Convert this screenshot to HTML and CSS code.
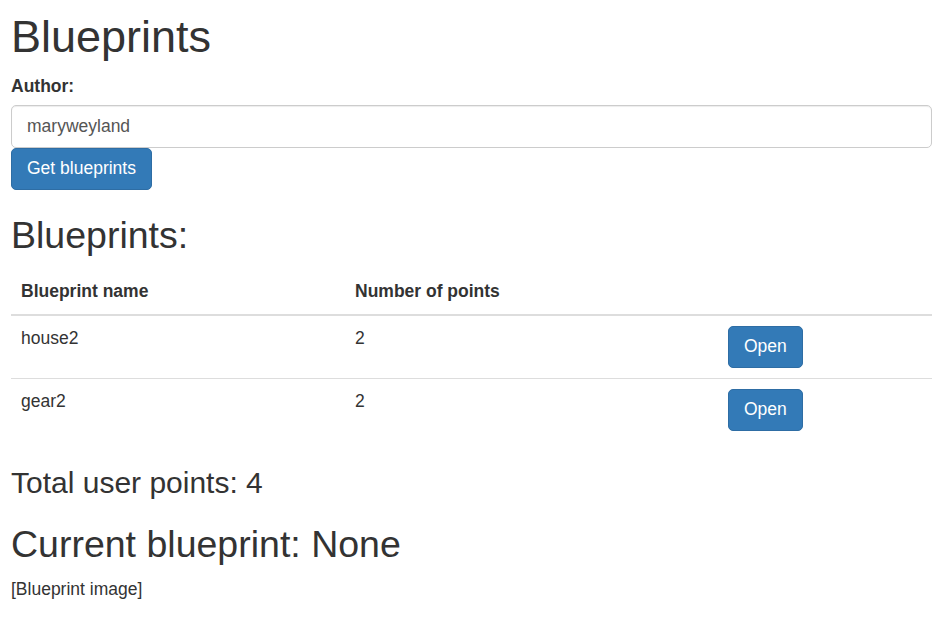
FILE: index.html
```html
<!DOCTYPE html>
<html lang="en">
<head>
<meta charset="utf-8">
<title>Blueprints</title>
<link rel="stylesheet" href="styles.css">
</head>
<body>
<div class="page">
  <h1 class="title">Blueprints</h1>
  <label class="field-label" for="author">Author:</label>
  <input id="author" class="text-input" type="text" value="maryweyland">
  <button class="btn">Get blueprints</button>

  <h2 class="section-title">Blueprints:</h2>
  <table class="bp-table">
    <thead>
      <tr>
        <th class="col-name">Blueprint name</th>
        <th class="col-points">Number of points</th>
        <th></th>
      </tr>
    </thead>
    <tbody>
      <tr>
        <td>house2</td>
        <td>2</td>
        <td><button class="btn">Open</button></td>
      </tr>
      <tr>
        <td>gear2</td>
        <td>2</td>
        <td><button class="btn">Open</button></td>
      </tr>
    </tbody>
  </table>

  <h3 class="total">Total user points: 4</h3>
  <h2 class="section-title">Current blueprint: None</h2>
  <div class="image-placeholder">[Blueprint image]</div>
</div>
</body>
</html>
```

FILE: styles.css
```css
html, body {
  margin: 0;
  padding: 0;
  background: #fff;
}

body {
  font-family: "Liberation Sans", Arial, Helvetica, sans-serif;
  font-size: 17.5px;
  line-height: 25px;
  color: #333;
}

.page {
  padding: 0 18px 0 11px;
}

.title {
  font-size: 45px;
  line-height: 49.5px;
  font-weight: normal;
  margin: 12px 0 12.5px;
}

.field-label {
  display: inline-block;
  font-weight: bold;
  margin-bottom: 6.25px;
}

.text-input {
  display: block;
  box-sizing: border-box;
  width: 100%;
  height: 42.5px;
  margin: 0;
  padding: 7.5px 15px;
  font-family: inherit;
  font-size: 17.5px;
  line-height: 25px;
  color: #555;
  background: #fff;
  border: 1.25px solid #ccc;
  border-radius: 5px;
  box-shadow: inset 0 1px 1px rgba(0, 0, 0, .075);
  outline: none;
}

.btn {
  display: inline-block;
  box-sizing: border-box;
  margin: 0;
  padding: 7.5px 15px;
  font-family: inherit;
  font-size: 17.5px;
  line-height: 25px;
  color: #fff;
  background: #337ab7;
  border: 1.25px solid #2e6da4;
  border-radius: 5px;
  cursor: pointer;
  vertical-align: top;
}

.section-title {
  font-size: 37.5px;
  line-height: 41.25px;
  font-weight: normal;
  margin: 25px 0 12.5px;
}

.total {
  font-size: 30px;
  line-height: 33px;
  font-weight: normal;
  margin: 25px 0 12.5px;
}

.bp-table {
  width: 100%;
  border-collapse: collapse;
  border-spacing: 0;
  margin-bottom: 25px;
}

.bp-table th,
.bp-table td {
  padding: 10px;
  text-align: left;
  vertical-align: top;
}

.bp-table th {
  font-weight: bold;
  vertical-align: bottom;
  border-bottom: 2.5px solid #ddd;
}

.bp-table td {
  border-top: 1.25px solid #ddd;
}

.col-name {
  width: 314px;
}

.col-points {
  width: 353px;
}
```
